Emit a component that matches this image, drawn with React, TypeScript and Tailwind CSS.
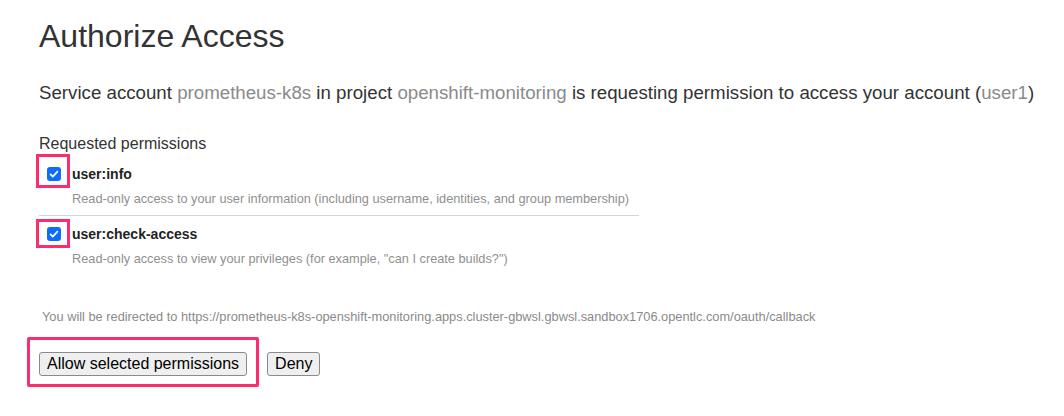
import React from "react";

const font = { fontFamily: '"Liberation Sans", Arial, Helvetica, sans-serif' };

function Check() {
    return (
        <span className="flex h-[14px] w-[14px] items-center justify-center rounded-[3px] bg-[#0b6cfd]">
            <svg viewBox="0 0 14 14" className="h-[12px] w-[12px]" fill="none">
                <path d="M3 7.4l2.6 2.6L11 4.2" stroke="#fff" strokeWidth="2" strokeLinecap="round" strokeLinejoin="round" />
            </svg>
        </span>
    );
}

function Permission({ name, desc, boxClass }: { name: string; desc: string; boxClass: string }) {
    return (
        <div>
            <div className="flex h-5 items-center">
                <span className="relative ml-[8px] mr-[11px] flex">
                    <Check />
                    <span className={"absolute border-[3px] border-[#fb2d6c] " + boxClass} />
                </span>
                <span className="text-[14px] font-bold leading-5 text-[#222]">{name}</span>
            </div>
            <div className="mt-[6px] whitespace-nowrap pl-[33px] text-[12.75px] leading-[18px] text-[#8f8f8f]">{desc}</div>
        </div>
    );
}

export default function App() {
    return (
        <div className="min-h-screen bg-white pl-[39px] pt-[18px]" style={font}>
            <h1 className="text-[32px] leading-[36px] text-[#333]">Authorize Access</h1>

            <p className="mt-[26px] whitespace-nowrap text-[18.7px] leading-[26px] text-[#333]">
                Service account <span className="text-[#8a8a8a]">prometheus-k8s</span> in project{" "}
                <span className="text-[#8a8a8a]">openshift-monitoring</span> is requesting permission to access your
                account (<span className="text-[#8a8a8a]">user1</span>)
            </p>

            <div className="mt-[28px] text-[16px] leading-5 text-[#333]">Requested permissions</div>

            <div className="mt-[10px] w-[600px]">
                <Permission
                    name="user:info"
                    desc="Read-only access to your user information (including username, identities, and group membership)"
                    boxClass="-left-[11px] -top-[13px] -right-[9px] -bottom-[7px]"
                />
                <div className="mt-[7px] border-t border-[#d4d4d4]" />
                <div className="mt-[8px]">
                    <Permission
                        name="user:check-access"
                        desc={'Read-only access to view your privileges (for example, "can I create builds?")'}
                        boxClass="-left-[11px] -top-[8px] -right-[9px] -bottom-[7px]"
                    />
                </div>
            </div>

            <div className="mt-[40px] whitespace-nowrap pl-[3px] text-[12.8px] leading-[18px] text-[#8a8a8a]">
                You will be redirected to https://prometheus-k8s-openshift-monitoring.apps.cluster-gbwsl.gbwsl.sandbox1706.opentlc.com/oauth/callback
            </div>

            <div className="mt-[26px] flex items-center gap-[20px]">
                <div className="relative flex">
                    <button className="h-[24px] rounded-[3px] border border-[#8a8a8a] bg-[#efefef] px-[7px] text-[16px] leading-none text-black">
                        Allow selected permissions
                    </button>
                    <span className="absolute -left-[12px] -top-[15px] -right-[12px] -bottom-[11px] rounded-[2px] border-[3px] border-[#fb2d6c]" />
                </div>
                <button className="h-[24px] rounded-[3px] border border-[#8a8a8a] bg-[#efefef] px-[7px] text-[16px] leading-none text-black">
                    Deny
                </button>
            </div>
        </div>
    );
}
